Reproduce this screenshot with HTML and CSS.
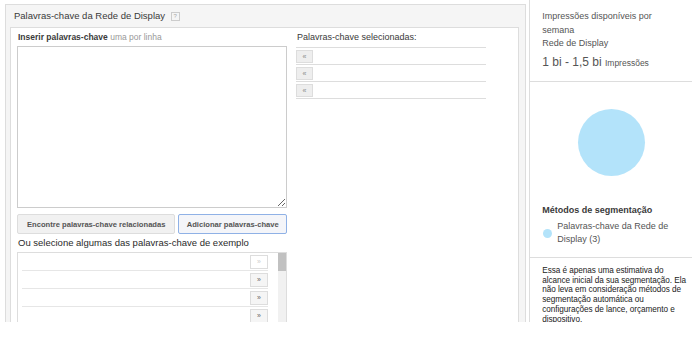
FILE: index.html
```html
<!DOCTYPE html>
<html lang="pt-BR">

<head>
    <meta charset="UTF-8">
    <meta name="viewport" content="width=device-width, initial-scale=1.0">
    <title>Palavras-chave da Rede de Display</title>
    <link rel="stylesheet" href="styles.css">
</head>

<body>
    <div class="page">
        <div class="main">
            <div class="panel">
                <div class="panel-head">
                    Palavras-chave da Rede de Display <span class="help">?</span>
                </div>
                <div class="panel-body">
                    <div class="col-left">
                        <div class="label"><b>Inserir palavras-chave</b> <span class="hint">uma por linha</span></div>
                        <textarea class="keywords"></textarea>
                        <div class="buttons">
                            <button class="btn">Encontre palavras-chave relacionadas</button>
                            <button class="btn btn-focus">Adicionar palavras-chave</button>
                        </div>
                        <div class="examples-title">Ou selecione algumas das palavras-chave de exemplo</div>
                        <div class="examples">
                            <ul class="example-list">
                                <li><span class="mini-btn faded">»</span></li>
                                <li><span class="mini-btn">»</span></li>
                                <li><span class="mini-btn">»</span></li>
                                <li><span class="mini-btn">»</span></li>
                                <li><span class="mini-btn">»</span></li>
                            </ul>
                            <div class="scrollbar"><div class="thumb"></div></div>
                        </div>
                    </div>
                    <div class="col-right">
                        <div class="label selected-title">Palavras-chave selecionadas:</div>
                        <ul class="selected-list">
                            <li><span class="mini-btn small">«</span></li>
                            <li><span class="mini-btn small">«</span></li>
                            <li><span class="mini-btn small">«</span></li>
                        </ul>
                    </div>
                </div>
            </div>
        </div>

        <div class="side">
            <div class="side-block reach">
                <div>Impressões disponíveis por semana</div>
                <div>Rede de Display</div>
                <div class="range">1 bi - 1,5 bi <span>Impressões</span></div>
            </div>
            <div class="chart">
                <div class="pie"></div>
            </div>
            <div class="side-block methods">
                <div class="methods-title">Métodos de segmentação</div>
                <div class="legend">
                    <span class="dot"></span>
                    <span>Palavras-chave da Rede de Display (3)</span>
                </div>
            </div>
            <div class="side-block note">
                Essa é apenas uma estimativa do alcance inicial da sua segmentação. Ela não leva em consideração métodos de segmentação automática ou configurações de lance, orçamento e dispositivo.
            </div>
        </div>
    </div>
</body>

</html>
```

FILE: styles.css
```css
body {
    font-family: 'Liberation Sans', Arial, sans-serif;
    margin: 0;
    background-color: #fff;
    color: #444;
}

.page {
    display: flex;
    height: 322px;
    overflow: hidden;
}

.main {
    width: 530px;
    padding: 4px 3px 0 5px;
    box-sizing: border-box;
}

.panel {
    border: 1px solid #ddd;
    border-bottom: none;
    background-color: #f5f5f5;
    height: 100%;
    box-sizing: border-box;
    padding: 0 6px 0 4px;
    display: flex;
    flex-direction: column;
}

.panel-head {
    height: 22px;
    line-height: 22px;
    font-size: 9.5px;
    color: #3a3a3a;
    padding-left: 4px;
}

.help {
    display: inline-block;
    width: 7px;
    height: 7px;
    line-height: 7px;
    border: 1px solid #ccc;
    font-size: 6px;
    text-align: center;
    color: #aaa;
    vertical-align: middle;
    margin-left: 3px;
}

.panel-body {
    flex: 1;
    background-color: #fff;
    border: 1px solid #ddd;
    border-bottom: none;
    display: flex;
    padding: 0 6px;
}

.col-left {
    width: 270px;
}

.label {
    font-size: 8.5px;
    height: 18px;
    line-height: 18px;
    padding-left: 1px;
    color: #3a3a3a;
}

.hint {
    color: #999;
}

.keywords {
    display: block;
    width: 270px;
    height: 162px;
    box-sizing: border-box;
    border: 1px solid #ccc;
    margin: 0;
    resize: vertical;
}

.buttons {
    display: flex;
    gap: 3px;
    margin-top: 6px;
}

.btn {
    height: 20px;
    padding: 0 9px;
    font-family: 'Liberation Sans', Arial, sans-serif;
    font-size: 7.6px;
    font-weight: bold;
    white-space: nowrap;
    color: #555;
    background-color: #f1f1f1;
    border: 1px solid #ddd;
    border-radius: 2px;
}

.btn-focus {
    border-color: #8fb1e6;
    background-color: #f4f5f9;
    width: 110px;
    padding: 0 4px;
}

.examples-title {
    font-size: 9.5px;
    color: #2a2a2a;
    height: 18px;
    line-height: 18px;
    padding-left: 1px;
}

.examples {
    display: flex;
    border: 1px solid #ddd;
    border-bottom: none;
    height: 80px;
}

.example-list {
    flex: 1;
    list-style: none;
    margin: 0;
    padding: 0 10px 0 4px;
}

.example-list li {
    height: 17px;
    border-bottom: 1px solid #e6e6e6;
    display: flex;
    justify-content: flex-end;
    align-items: center;
}

.mini-btn {
    display: inline-block;
    width: 16px;
    height: 12px;
    line-height: 12px;
    border: 1px solid #ddd;
    background-color: #f5f5f5;
    font-size: 7px;
    text-align: center;
    color: #666;
}

.mini-btn.faded {
    background-color: #fff;
    color: #ccc;
}

.scrollbar {
    width: 8px;
    background-color: #f1f1f1;
}

.thumb {
    height: 18px;
    background-color: #c1c1c1;
}

.col-right {
    margin-left: 9px;
    width: 190px;
}

.selected-title {
    font-size: 9px;
    height: 19px;
    line-height: 19px;
}

.selected-list {
    list-style: none;
    margin: 0;
    padding: 0;
    border-top: 1px solid #ddd;
}

.selected-list li {
    height: 16px;
    border-bottom: 1px solid #ddd;
    display: flex;
    align-items: center;
}

.mini-btn.small {
    width: 15px;
    height: 11px;
    line-height: 11px;
    font-size: 7px;
    color: #888;
    background-color: #eee;
}

.side {
    width: 162px;
    border-left: 1px solid #ddd;
    font-size: 9px;
    color: #555;
}

.side-block {
    padding: 0 8px 0 12px;
    border-bottom: 1px solid #ddd;
}

.reach {
    padding-top: 10px;
    height: 71px;
    line-height: 13.5px;
}

.range {
    font-size: 12px;
    margin-top: 5px;
}

.range span {
    font-size: 8.5px;
}

.chart {
    height: 120px;
    display: flex;
    justify-content: center;
    align-items: center;
}

.pie {
    width: 67px;
    height: 67px;
    border-radius: 50%;
    background-color: #b3e3fa;
}

.methods {
    padding-top: 3px;
    height: 52px;
}

.methods-title {
    font-size: 9px;
    font-weight: bold;
    color: #3a3a3a;
    margin-bottom: 5px;
}

.legend {
    display: flex;
    align-items: center;
    gap: 5px;
    line-height: 13px;
    color: #555;
    padding-left: 1px;
}

.dot {
    flex: none;
    width: 9px;
    height: 9px;
    border-radius: 50%;
    background-color: #b3e3fa;
}

.note {
    border-bottom: none;
    padding-top: 8px;
    padding-right: 1px;
    font-size: 8.2px;
    letter-spacing: -0.05px;
    line-height: 9.7px;
    color: #222;
}
```
